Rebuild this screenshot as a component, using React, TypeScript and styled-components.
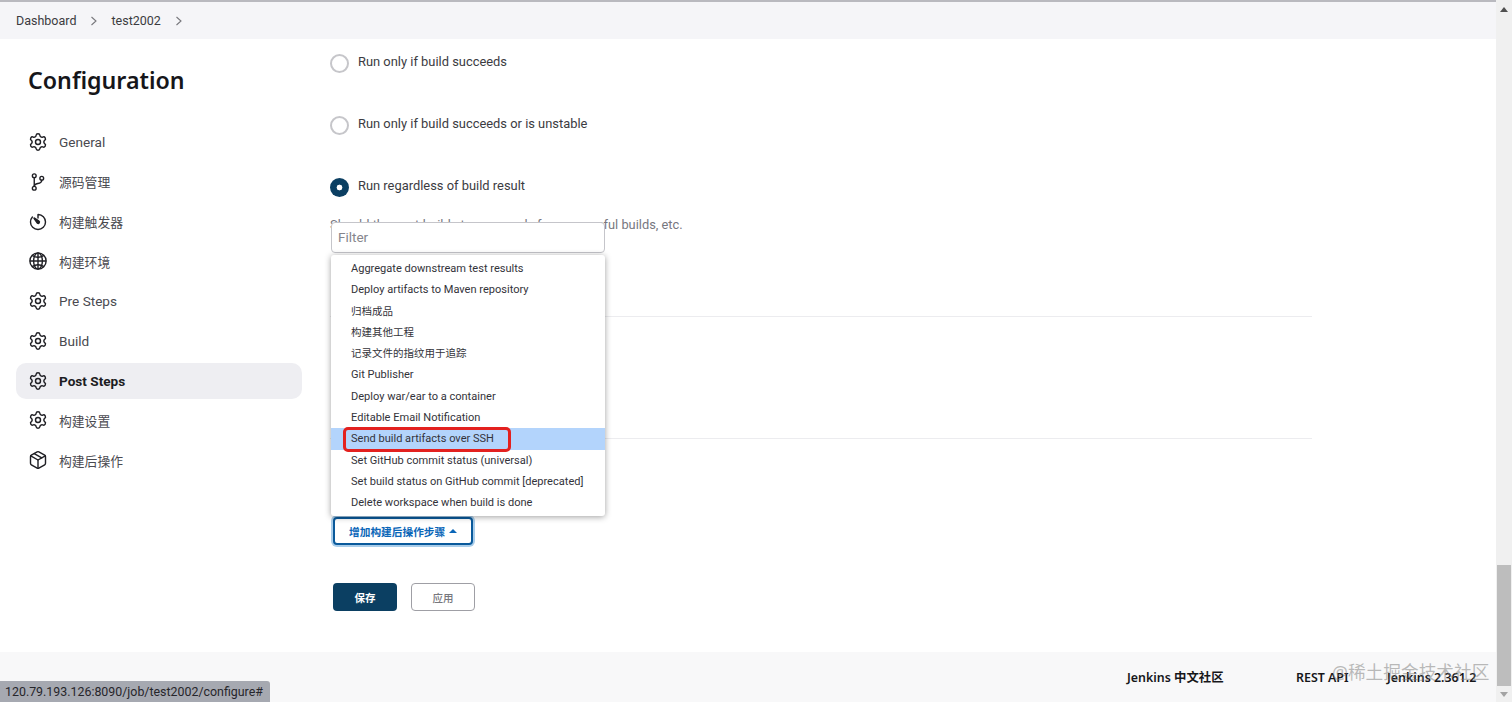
import React from "react";
import styled, { createGlobalStyle } from "styled-components";
import { IoGitBranchOutline, IoTimerOutline, IoGlobeOutline } from "react-icons/io5";
import { Settings, Package } from "lucide-react";

const FONT = `Roboto, "Noto Sans CJK SC", sans-serif`;
const BOLD = `"Noto Sans", "Noto Sans CJK SC", sans-serif`;

const Global = createGlobalStyle`
  html, body { margin: 0; padding: 0; height: 702px; overflow: hidden; background: #fff; }
  body { font-family: ${FONT}; color: #333; }
  * { box-sizing: border-box; }
`;

const Shell = styled.div`
  position: relative;
  display: flex;
  width: 1512px;
  height: 702px;
  overflow: hidden;
`;
const Page = styled.div`
  display: flex;
  flex-direction: column;
  flex: 1;
  min-width: 0;
`;
const Crumbs = styled.nav`
  display: flex;
  align-items: center;
  height: 39px;
  padding-left: 16px;
  background: #f5f5f8;
  border-top: 2px solid #b9b9bf;
  font-size: 12.5px;
  color: #3b3b40;
`;
const Crumb = styled.span`
  display: inline-block;
`;
const Chevron = styled.svg`
  width: 8px;
  height: 10px;
  margin: 0 13px 0 14px;
  fill: none;
  stroke: #77777c;
  stroke-width: 1.1;
`;
const Body = styled.div`
  display: flex;
  flex: 1;
  min-height: 0;
`;
const Side = styled.aside`
  width: 330px;
  flex: none;
  padding: 25px 28px 0 16px;
`;
const Title = styled.h1`
  margin: 0 0 27px 12px;
  font-family: ${BOLD};
  font-size: 23.2px;
  line-height: 33px;
  font-weight: 600;
  color: #16161a;
`;
const NavList = styled.ul`
  list-style: none;
  margin: 0;
  padding: 0;
  display: flex;
  flex-direction: column;
`;
const NavItem = styled.li<{ $active?: boolean; $cjk?: boolean }>`
  display: flex;
  align-items: center;
  height: 36px;
  margin-bottom: 3.75px;
  padding-left: 12px;
  gap: 11px;
  border-radius: 10px;
  width: 286px;
  font-size: ${(p) => (p.$cjk ? "12.8px" : "13.6px")};
  color: ${(p) => (p.$active ? "#1c1c22" : "#4a4a50")};
  font-weight: ${(p) => (p.$active ? 700 : 400)};
  background: ${(p) => (p.$active ? "#eeeef2" : "transparent")};
  svg { width: 20px; height: 20px; color: #1f1f24; flex: none; }
  svg.io * { stroke-width: 36; }
`;
const Main = styled.main`
  flex: 1;
  padding: 0 184px 0 0;
  min-width: 0;
`;
const RadioRow = styled.label`
  display: flex;
  align-items: center;
  gap: 9px;
  height: 20px;
  margin-bottom: 42px;
  font-size: 12.9px;
  color: #3b3b42;
  &:first-child { margin-top: 14px; }
`;
const RadioText = styled.span`
  line-height: 18px;
  margin-bottom: 2px;
`;
const Radio = styled.span<{ $on?: boolean }>`
  display: inline-block;
  width: 19px;
  height: 19px;
  border-radius: 50%;
  flex: none;
  ${(p) =>
    p.$on
      ? "background: radial-gradient(circle, #fff 0 2.6px, #0b3f62 3.2px);"
      : "border: 2px solid #c6c6ca; background: #fff;"}
`;
const Help = styled.p`
  margin: -24px 0 0;
  height: 20px;
  font-size: 12.85px;
  line-height: 20px;
  white-space: nowrap;
  color: #77777f;
`;
const Rule = styled.hr<{ $gap: number }>`
  border: 0;
  border-top: 1px solid #ececef;
  margin: ${(p) => p.$gap}px 0 0;
`;
const Actions = styled.div`
  padding-left: 3px;
`;
const AddButton = styled.button`
  display: flex;
  align-items: center;
  gap: 4px;
  width: 140px;
  height: 28px;
  margin-top: 78px;
  padding: 0 0 0 14px;
  background: #fff;
  border: 2px solid #0a5a9c;
  border-radius: 4px;
  box-shadow: 0 0 0 2px #a9cdea;
  color: #0a66b8;
  font: 600 10.7px ${BOLD};
`;
const Caret = styled.span`
  width: 0;
  height: 0;
  border: 4px solid transparent;
  border-top: 0;
  border-bottom-color: #0a66b8;
`;
const SaveRow = styled.div`
  display: flex;
  gap: 14px;
  margin-top: 38px;
`;
const Save = styled.button`
  width: 64px;
  height: 28px;
  border: 0;
  border-radius: 4px;
  background: #0b3f62;
  color: #fff;
  font: 600 10.5px ${BOLD};
`;
const Apply = styled.button`
  width: 64px;
  height: 28px;
  border: 1.5px solid #9f9fa5;
  border-radius: 4px;
  background: #fff;
  color: #77777d;
  font: 500 10.5px ${BOLD};
`;
const Footer = styled.footer`
  flex: none;
  height: 50px;
  display: flex;
  align-items: center;
  justify-content: flex-end;
  padding: 0 18px 0 0;
  background: #f8f8f9;
  font-family: ${BOLD};
  font-size: 12.4px;
  font-weight: 600;
  color: #16161a;
`;
const FootLink = styled.span<{ $w: number }>`
  width: ${(p) => p.$w}px;
  white-space: nowrap;
`;
const Scrollbar = styled.div`
  flex: none;
  width: 16px;
  background: #f0f0f0;
  display: flex;
  flex-direction: column;
  align-items: center;
  padding: 0 1px;
`;
const ArrowUp = styled.div`
  width: 0;
  height: 0;
  margin: 7px 0 auto;
  border: 4px solid transparent;
  border-top: 0;
  border-bottom: 5px solid #505050;
`;
const Thumb = styled.div`
  width: 14px;
  height: 121px;
  background: #bdbdbd;
`;
const ArrowDown = styled.div`
  width: 0;
  height: 0;
  margin: 6px 0 5px;
  border: 4px solid transparent;
  border-bottom: 0;
  border-top: 5px solid #a3a3a3;
`;
const Popup = styled.div`
  position: absolute;
  left: 331px;
  top: 222px;
  width: 274px;
`;
const Filter = styled.input`
  display: block;
  width: 100%;
  height: 31px;
  padding: 0 6px 2px;
  margin-bottom: 2px;
  border: 1px solid #c5c5ca;
  border-radius: 4px;
  outline: 0;
  font: 13.5px ${FONT};
  &::placeholder { color: #85858c; opacity: 1; }
`;
const Menu = styled.ul`
  list-style: none;
  margin: 0;
  padding: 3px 0 2px;
  background: #fff;
  border-radius: 3px;
  box-shadow: 0 1px 6px rgba(0, 0, 0, 0.38);
`;
const MenuItem = styled.li<{ $hi?: boolean; $cjk?: boolean }>`
  height: 21.3px;
  line-height: 21.3px;
  padding-left: 20px;
  font-size: ${(p) => (p.$cjk ? "10.5px" : "11.05px")};
  white-space: nowrap;
  color: #33333a;
  background: ${(p) => (p.$hi ? "#b3d4fc" : "transparent")};
`;
const Marker = styled.div`
  position: absolute;
  left: 343px;
  top: 427px;
  width: 168px;
  height: 25px;
  border: 3px solid #e3211f;
  border-radius: 5px;
`;
const Status = styled.div`
  position: absolute;
  left: 0;
  bottom: 0;
  height: 21px;
  width: 270px;
  padding-left: 5px;
  line-height: 21px;
  font-size: 12.4px;
  white-space: nowrap;
  color: #26262b;
  background: #a6a9b1;
  border-top-right-radius: 3px;
`;
const Watermark = styled.div`
  position: absolute;
  left: 1332px;
  top: 660px;
  font-family: ${BOLD};
  font-size: 17.7px;
  line-height: 24px;
  white-space: nowrap;
  color: rgba(120, 120, 120, 0.5);
`;

const Gear = () => <Settings strokeWidth={1.7} />;
const navItems: { label: string; icon: React.ReactNode; active?: boolean; cjk?: boolean }[] = [
  { label: "General", icon: <Gear /> },
  { label: "源码管理", icon: <IoGitBranchOutline className="io" />, cjk: true },
  { label: "构建触发器", icon: <IoTimerOutline className="io" />, cjk: true },
  { label: "构建环境", icon: <IoGlobeOutline className="io" />, cjk: true },
  { label: "Pre Steps", icon: <Gear /> },
  { label: "Build", icon: <Gear /> },
  { label: "Post Steps", icon: <Gear />, active: true },
  { label: "构建设置", icon: <Gear />, cjk: true },
  { label: "构建后操作", icon: <Package strokeWidth={1.7} />, cjk: true },
];

const menuItems: { text: string; cjk?: boolean }[] = [
  { text: "Aggregate downstream test results" },
  { text: "Deploy artifacts to Maven repository" },
  { text: "归档成品", cjk: true },
  { text: "构建其他工程", cjk: true },
  { text: "记录文件的指纹用于追踪", cjk: true },
  { text: "Git Publisher" },
  { text: "Deploy war/ear to a container" },
  { text: "Editable Email Notification" },
  { text: "Send build artifacts over SSH" },
  { text: "Set GitHub commit status (universal)" },
  { text: "Set build status on GitHub commit [deprecated]" },
  { text: "Delete workspace when build is done" },
];

const Sep = () => (
  <Chevron viewBox="0 0 8 10">
    <path d="M1.5 1 L6 5 L1.5 9" />
  </Chevron>
);

export default function App() {
  return (
    <Shell>
      <Global />
      <Page>
        <Crumbs>
          <Crumb>Dashboard</Crumb>
          <Sep />
          <Crumb>test2002</Crumb>
          <Sep />
        </Crumbs>
        <Body>
          <Side>
            <Title>Configuration</Title>
            <NavList>
              {navItems.map((n) => (
                <NavItem key={n.label} $active={n.active} $cjk={n.cjk}>
                  {n.icon}
                  <span>{n.label}</span>
                </NavItem>
              ))}
            </NavList>
          </Side>
          <Main>
            <RadioRow>
              <Radio />
              <RadioText>Run only if build succeeds</RadioText>
            </RadioRow>
            <RadioRow>
              <Radio />
              <RadioText>Run only if build succeeds or is unstable</RadioText>
            </RadioRow>
            <RadioRow>
              <Radio $on />
              <RadioText>Run regardless of build result</RadioText>
            </RadioRow>
            <Help>Should the post-build steps run only for successful builds, etc.</Help>
            <Rule $gap={81} />
            <Rule $gap={121} />
            <Actions>
              <AddButton>
                增加构建后操作步骤
                <Caret />
              </AddButton>
              <SaveRow>
                <Save>保存</Save>
                <Apply>应用</Apply>
              </SaveRow>
            </Actions>
          </Main>
        </Body>
        <Footer>
          <FootLink $w={169}>Jenkins 中文社区</FootLink>
          <FootLink $w={91}>REST API</FootLink>
          <FootLink $w={91}>Jenkins 2.361.2</FootLink>
        </Footer>
      </Page>
      <Scrollbar>
        <ArrowUp />
        <Thumb />
        <ArrowDown />
      </Scrollbar>
      <Popup>
        <Filter placeholder="Filter" readOnly />
        <Menu>
          {menuItems.map((m, i) => (
            <MenuItem key={m.text} $hi={i === 8} $cjk={m.cjk}>
              {m.text}
            </MenuItem>
          ))}
        </Menu>
      </Popup>
      <Marker />
      <Watermark>@稀土掘金技术社区</Watermark>
      <Status>120.79.193.126:8090/job/test2002/configure#</Status>
    </Shell>
  );
}
